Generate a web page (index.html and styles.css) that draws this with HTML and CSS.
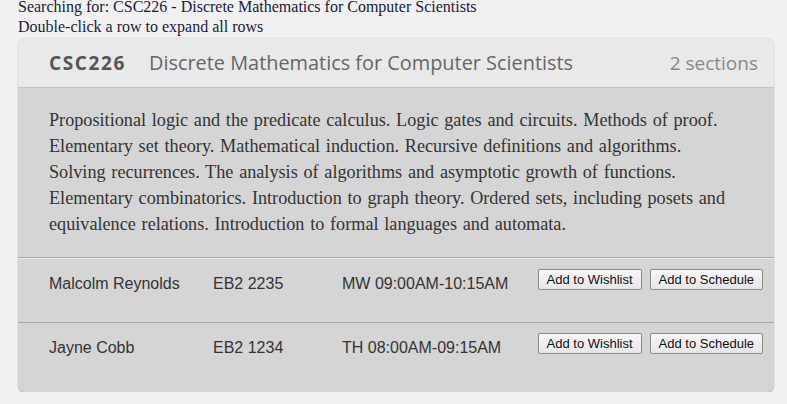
FILE: index.html
```html
<!DOCTYPE html>
<html>
<head>
<meta charset="utf-8">
<link rel="stylesheet" href="styles.css">
</head>
<body>
<div class="search-info">
  <div>Searching for: CSC226 - Discrete Mathematics for Computer Scientists</div>
  <div>Double-click a row to expand all rows</div>
</div>
<div class="course-card">
  <div class="course-header">
    <span class="course-code">CSC226</span>
    <span class="course-title">Discrete Mathematics for Computer Scientists</span>
    <span class="course-count">2 sections</span>
  </div>
  <div class="course-desc">
    <p>Propositional logic and the predicate calculus. Logic gates and circuits. Methods of proof.<br>
    Elementary set theory. Mathematical induction. Recursive definitions and algorithms.<br>
    Solving recurrences. The analysis of algorithms and asymptotic growth of functions.<br>
    Elementary combinatorics. Introduction to graph theory. Ordered sets, including posets and<br>
    equivalence relations. Introduction to formal languages and automata.</p>
  </div>
  <div class="section-row">
    <span class="col-name">Malcolm Reynolds</span>
    <span class="col-room">EB2 2235</span>
    <span class="col-time">MW 09:00AM-10:15AM</span>
    <div class="actions">
      <button class="btn">Add to Wishlist</button>
      <button class="btn">Add to Schedule</button>
    </div>
  </div>
  <div class="section-row">
    <span class="col-name">Jayne Cobb</span>
    <span class="col-room">EB2 1234</span>
    <span class="col-time">TH 08:00AM-09:15AM</span>
    <div class="actions">
      <button class="btn">Add to Wishlist</button>
      <button class="btn">Add to Schedule</button>
    </div>
  </div>
</div>
</body>
</html>
```

FILE: styles.css
```css
html, body {
  margin: 0;
  padding: 0;
}
body {
  background: #f1f1f1;
  padding: 0 13px 0 18px;
  font-family: "Liberation Serif", serif;
  color: #1a1a40;
}
.search-info {
  font-size: 16px;
  line-height: 20px;
  margin-top: -3px;
  color: #1c1c3a;
}
.course-card {
  margin-top: 1px;
  padding-bottom: 6px;
  background: #d5d5d5;
  border-radius: 8px;
  box-shadow: 0 2px 1px rgba(0,0,0,0.18), 0 0 0 1px rgba(0,0,0,0.04);
  overflow: hidden;
}
.course-header {
  display: flex;
  align-items: center;
  height: 49px;
  padding: 0 16px 0 31px;
  background: #e9e9e9;
  border-bottom: 1px solid #c4c4c4;
  font-family: "Open Sans", sans-serif;
}
.course-code {
  font-weight: bold;
  font-size: 19px;
  letter-spacing: 1.6px;
  color: #555;
  width: 100px;
}
.course-title {
  font-size: 19.9px;
  color: #666;
  flex: 1;
}
.course-count {
  font-size: 19px;
  color: #888;
}
.course-desc {
  padding: 19px 31px 20px;
  border-bottom: 1px solid #aaa;
  font-family: "Liberation Serif", serif;
  font-size: 18.2px;
  word-spacing: 1.2px;
  line-height: 26px;
  color: #333;
}
.course-desc p {
  margin: 0;
}
.section-row {
  display: flex;
  align-items: flex-start;
  height: 63px;
  padding: 0 11px 0 31px;
  border-top: 1px solid #eaeaea;
  font-family: "Liberation Sans", sans-serif;
  font-size: 16px;
  color: #333;
}
.section-row + .section-row {
  border-top: 1px solid #aaa;
}
.section-row > span {
  margin-top: 15px;
  line-height: 19px;
}
.col-name { width: 164px; }
.col-room { width: 129px; }
.col-time { flex: 1; }
.actions {
  display: flex;
  gap: 8px;
  margin-top: 10px;
}
.btn {
  font-family: "Liberation Sans", sans-serif;
  font-size: 13px;
  color: #111;
  height: 21px;
  padding: 0 8px;
  background: linear-gradient(#f8f8f8, #e6e6e6);
  border: 1px solid #8a8a8a;
  border-radius: 2px;
}
```
